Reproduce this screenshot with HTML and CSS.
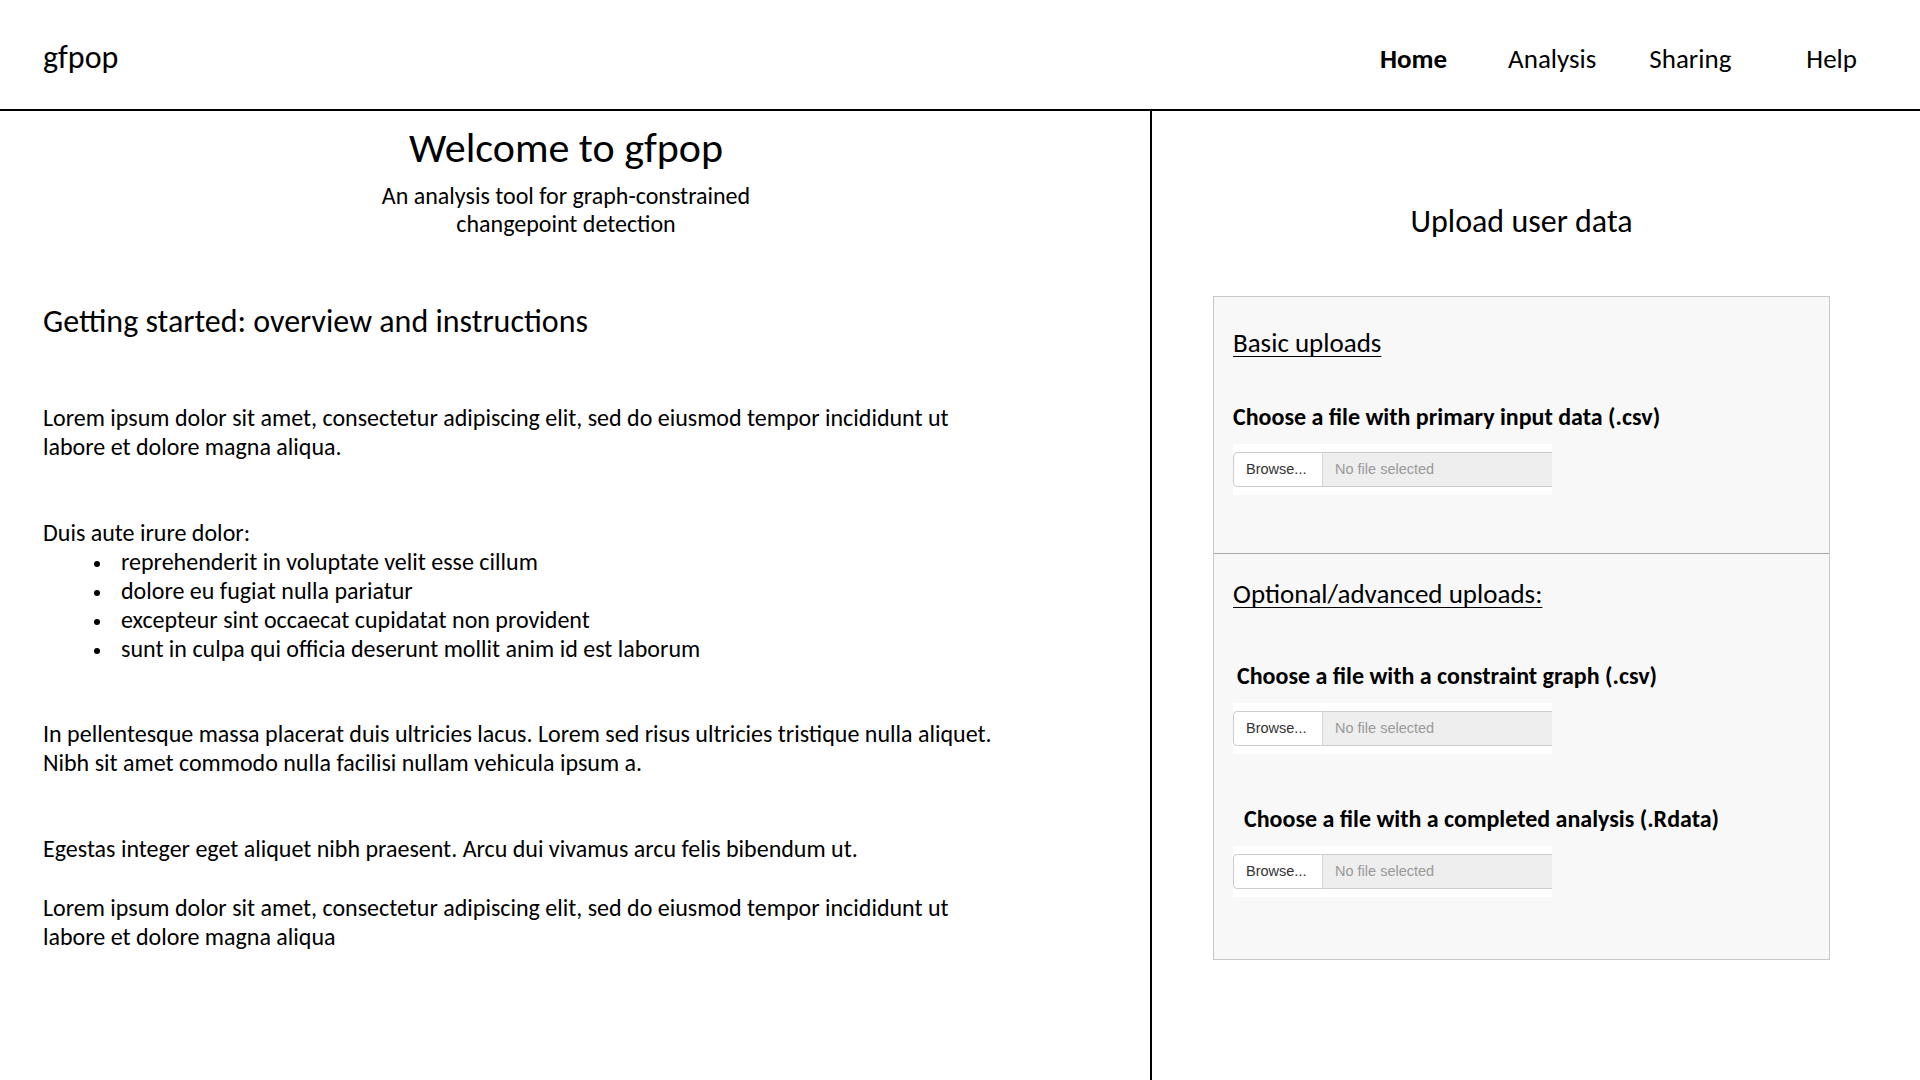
FILE: index.html
```html
<!DOCTYPE html>
<html lang="en">
<head>
<meta charset="utf-8">
<title>gfpop</title>
<link rel="stylesheet" href="styles.css">
</head>
<body>
<header class="topbar">
  <div class="brand">gfpop</div>
  <nav class="nav">
    <a class="nav-item active">Home</a>
    <a class="nav-item analysis">Analysis</a>
    <a class="nav-item sharing">Sharing</a>
    <a class="nav-item help">Help</a>
  </nav>
</header>
<main class="layout">
  <section class="left">
    <div class="intro">
      <h1 class="title">Welcome to gfpop</h1>
      <p class="subtitle">An analysis tool for graph-constrained<br>changepoint detection</p>
    </div>
    <h2 class="section-title">Getting started: overview and instructions</h2>
    <p class="para p1">Lorem ipsum dolor sit amet, consectetur adipiscing elit, sed do eiusmod tempor incididunt ut<br>labore et dolore magna aliqua.</p>
    <div class="para p2">
      <div>Duis aute irure dolor:</div>
      <ul class="bullets">
        <li>reprehenderit in voluptate velit esse cillum</li>
        <li>dolore eu fugiat nulla pariatur</li>
        <li>excepteur sint occaecat cupidatat non provident</li>
        <li>sunt in culpa qui officia deserunt mollit anim id est laborum</li>
      </ul>
    </div>
    <p class="para p3">In pellentesque massa placerat duis ultricies lacus. Lorem sed risus ultricies tristique nulla aliquet.<br>Nibh sit amet commodo nulla facilisi nullam vehicula ipsum a.</p>
    <p class="para p4">Egestas integer eget aliquet nibh praesent. Arcu dui vivamus arcu felis bibendum ut.</p>
    <p class="para p5">Lorem ipsum dolor sit amet, consectetur adipiscing elit, sed do eiusmod tempor incididunt ut<br>labore et dolore magna aliqua</p>
  </section>
  <section class="right">
    <h2 class="upload-title">Upload user data</h2>
    <div class="upload-box">
      <div class="upload-section basic">
        <h3 class="group-title">Basic uploads</h3>
        <div class="field f1">
          <div class="field-label">Choose a file with primary input data (.csv)</div>
          <div class="file-input">
            <span class="browse">Browse...</span>
            <span class="filename">No file selected</span>
          </div>
        </div>
      </div>
      <div class="upload-section advanced">
        <h3 class="group-title">Optional/advanced uploads:</h3>
        <div class="field f2">
          <div class="field-label">Choose a file with a constraint graph (.csv)</div>
          <div class="file-input">
            <span class="browse">Browse...</span>
            <span class="filename">No file selected</span>
          </div>
        </div>
        <div class="field f3">
          <div class="field-label">Choose a file with a completed analysis (.Rdata)</div>
          <div class="file-input">
            <span class="browse">Browse...</span>
            <span class="filename">No file selected</span>
          </div>
        </div>
      </div>
    </div>
  </section>
</main>
</body>
</html>
```
FILE: styles.css
```css
* { box-sizing: border-box; }
html, body { margin: 0; padding: 0; background: #fff; }
body {
  font-family: Carlito, Calibri, Lato, "Open Sans", sans-serif;
  color: #000;
  width: 1920px;
  height: 1080px;
  overflow: hidden;
}

.topbar {
  height: 111px;
  border-bottom: 2px solid #000;
  display: flex;
  align-items: center;
  padding: 0 0 0 43px;
}
.brand {
  font-size: 32px;
  line-height: 40px;
  margin-top: 6px;
}
.nav {
  margin-left: auto;
  display: flex;
  align-items: center;
  margin-right: 63px;
  margin-top: 8px;
}
.nav-item {
  font-size: 27px;
  line-height: 34px;
  color: #000;
}
.nav-item.active { font-weight: bold; }
.nav-item.analysis { margin-left: 61px; }
.nav-item.sharing { margin-left: 53px; }
.nav-item.help { margin-left: 75px; }

.layout {
  display: grid;
  grid-template-columns: 1152px 1fr;
  height: 969px;
}
.left {
  border-right: 2px solid #000;
  padding: 0 0 0 43px;
}
.intro {
  width: 1046px;
  text-align: center;
  padding-top: 12px;
}
.title {
  margin: 0;
  font-weight: normal;
  font-size: 42px;
  line-height: 50px;
}
.subtitle {
  margin: 9px 0 0;
  font-size: 24px;
  line-height: 28px;
}
.section-title {
  margin: 66px 0 0;
  font-weight: normal;
  font-size: 32px;
  line-height: 36px;
}
.para {
  margin: 0;
  font-size: 24px;
  line-height: 29px;
}
.p1 { margin-top: 63px; }
.p2 { margin-top: 57px; }
.p3 { margin-top: 56px; }
.p4 { margin-top: 57px; }
.p5 { margin-top: 30px; }
.bullets {
  margin: 0;
  padding: 0 0 0 78px;
  list-style: none;
}
.bullets li { position: relative; }
.bullets li::before {
  content: "";
  position: absolute;
  left: -27px;
  top: 14px;
  width: 6px;
  height: 6px;
  border-radius: 50%;
  background: #000;
}

.right {
  padding: 93px 90px 0 61px;
}
.upload-title {
  margin: 0;
  text-align: center;
  font-weight: normal;
  font-size: 32px;
  line-height: 35px;
}
.upload-box {
  margin-top: 57px;
  background: #f8f8f8;
  border: 1px solid #c9c9c9;
}
.upload-section { padding: 0 19px; }
.upload-section.basic {
  padding-top: 30px;
  padding-bottom: 58px;
  border-bottom: 1px solid #a6a6a6;
}
.upload-section.advanced {
  padding-top: 24px;
  padding-bottom: 62px;
}
.group-title {
  margin: 0;
  font-weight: normal;
  font-size: 27px;
  line-height: 32px;
  text-decoration: underline;
  text-underline-offset: 4px;
  text-decoration-thickness: 1px;
}
.field-label {
  font-weight: bold;
  font-size: 24px;
  line-height: 28px;
}
.f1 { margin-top: 44px; }
.f2 { margin-top: 52px; padding-left: 4px; }
.f3 { margin-top: 51px; padding-left: 11px; }
.f2 .file-input { margin-left: -4px; }
.f3 .file-input { margin-left: -11px; }
.file-input {
  margin-top: 13px;
  width: 319px;
  background: #fff;
  padding: 8px 0;
  display: flex;
  font-family: "Liberation Sans", Arial, sans-serif;
  font-size: 14.5px;
}
.browse {
  width: 90px;
  height: 35px;
  line-height: 33px;
  border: 1px solid #cccccc;
  border-radius: 4px 0 0 4px;
  background: #fff;
  color: #333;
  padding-left: 12px;
}
.filename {
  flex: 1;
  height: 35px;
  line-height: 33px;
  background: #eeeeee;
  border-top: 1px solid #cccccc;
  border-bottom: 1px solid #cccccc;
  border-left: 1px solid #d4d4d4;
  margin-left: -1px;
  color: #999;
  padding-left: 12px;
}
```
